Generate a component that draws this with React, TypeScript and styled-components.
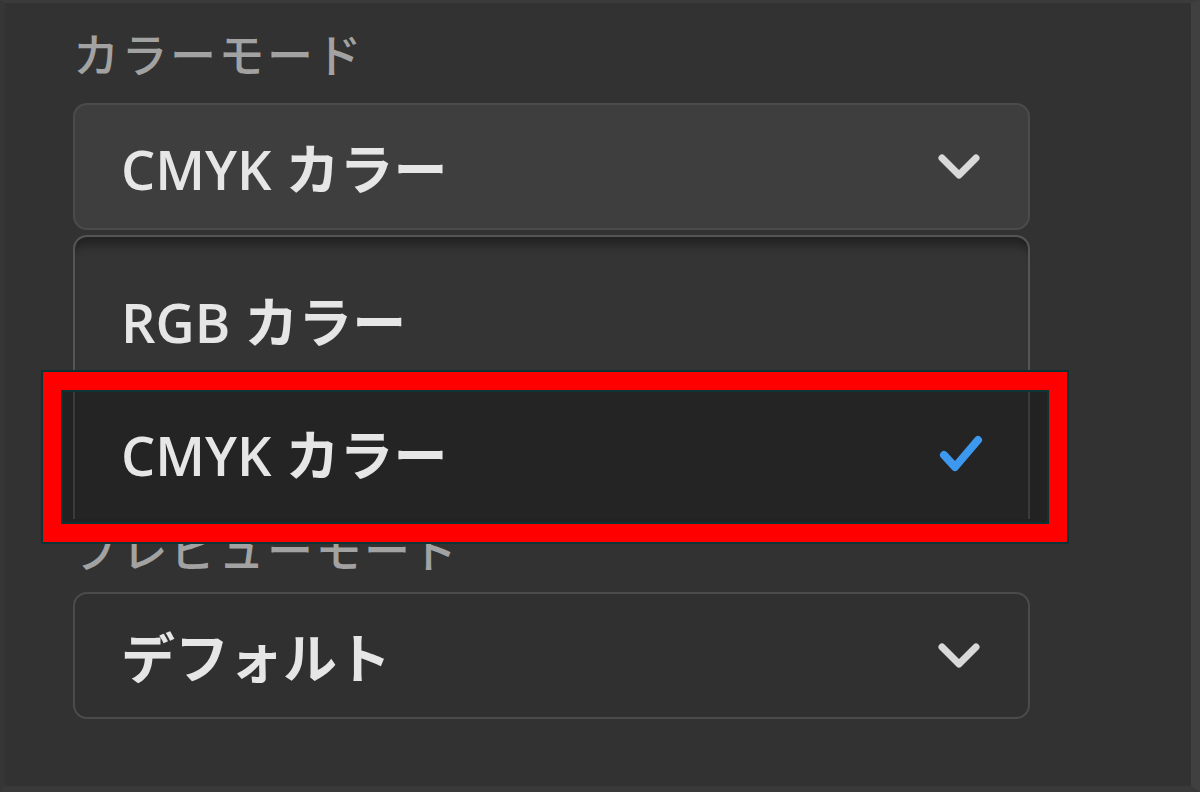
import React from 'react'
import styled, { createGlobalStyle } from 'styled-components'

const GlobalStyle = createGlobalStyle`
  body {
    margin: 0;
    background: #323232;
    font-family: "Open Sans", "Noto Sans CJK JP", sans-serif;
  }
`

const Panel = styled.div`
  position: relative;
  width: 1200px;
  height: 792px;
  box-sizing: border-box;
  background: #323232;
  border-top: 3px solid #3b3b3b;
  border-left: 5px solid #363636;
  border-right: 9px solid #404040;
  border-bottom: 6px solid #393939;
  padding: 21px 0 0 68px;
  overflow: hidden;
`

const Field = styled.div`
  width: 957px;
  display: flex;
  flex-direction: column;
`

const Label = styled.div`
  font-family: "Noto Sans CJK JP", sans-serif;
  font-size: 46px;
  font-weight: 500;
  line-height: 56px;
  color: #a2a2a2;
  letter-spacing: 2.5px;
`

const Select = styled.div<{ $bg: string; $gap: number }>`
  margin-top: ${p => p.$gap}px;
  height: 127px;
  box-sizing: border-box;
  border: 2px solid #4b4b4b;
  border-radius: 14px;
  background: ${p => p.$bg};
  display: flex;
  align-items: center;
  justify-content: space-between;
  padding: 0 47px 0 46px;
`

const Value = styled.span`
  font-size: 54px;
  font-weight: 600;
  color: #e6e6e6;
  white-space: nowrap;
`

const Menu = styled.div`
  margin-top: 5px;
  box-sizing: border-box;
  border: 2px solid #555555;
  border-bottom: none;
  border-radius: 14px 14px 0 0;
  background: #343434;
  padding-top: 16px;
  box-shadow: inset 0 16px 8px -8px rgba(0, 0, 0, 0.35);
`

const Item = styled.div<{ $raised?: boolean }>`
  height: 133px;
  display: flex;
  align-items: center;
  justify-content: space-between;
  padding: 0 45px 0 46px;

  & > * {
    position: relative;
    z-index: ${p => (p.$raised ? 2 : 'auto')};
  }
`

const Highlight = styled.div`
  position: absolute;
  z-index: 1;
  left: 38px;
  top: 369px;
  width: 1024px;
  height: 170px;
  box-sizing: border-box;
  border: 18px solid #ff0000;
  background: rgba(0, 0, 0, 0.3);
  box-shadow: 0 0 0 2px #0c3434, inset 0 0 0 2px #0c3434;
`

const Chevron = () => (
  <svg width="44" height="28" viewBox="0 0 44 28">
    <path d="M5 5 L22 22 L39 5" fill="none" stroke="#d9d9d9" strokeWidth="7" strokeLinecap="round" strokeLinejoin="round" />
  </svg>
)

const Check = () => (
  <svg width="44" height="42" viewBox="0 0 44 42">
    <path d="M5 23 L16 35 L39 8" fill="none" stroke="#3d99ef" strokeWidth="8" strokeLinecap="round" strokeLinejoin="round" />
  </svg>
)

export default function App() {
  return (
    <Panel>
      <GlobalStyle />
      <Field>
        <Label>カラーモード</Label>
        <Select $bg="#3e3e3e" $gap={23}>
          <Value>CMYK カラー</Value>
          <Chevron />
        </Select>
        <Menu>
          <Item>
            <Value>RGB カラー</Value>
          </Item>
          <Item $raised>
            <Value>CMYK カラー</Value>
            <Check />
          </Item>
        </Menu>
        <Label>プレビューモード</Label>
        <Select $bg="#303030" $gap={17}>
          <Value>デフォルト</Value>
          <Chevron />
        </Select>
      </Field>
      <Highlight />
    </Panel>
  )
}
